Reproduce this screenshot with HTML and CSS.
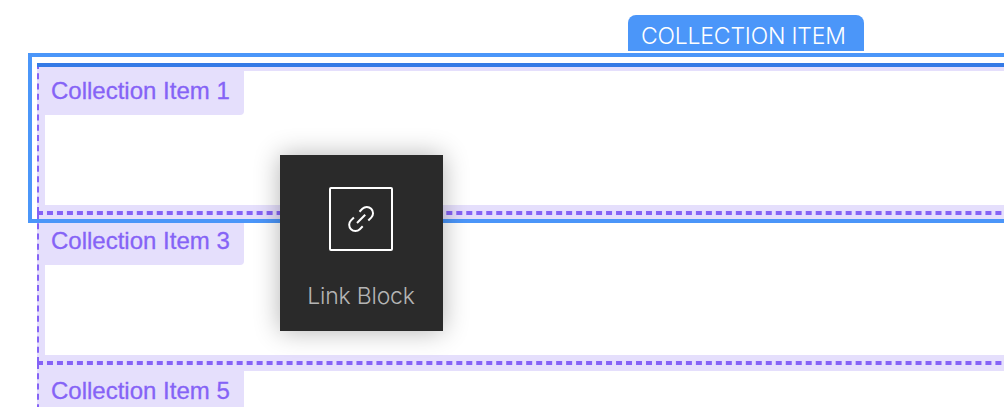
FILE: index.html
```
<!DOCTYPE html>
<html lang="en">
<head>
	<meta charset="utf-8">
	<title>Collection list</title>
	<link rel="stylesheet" href="styles.css">
</head>
<body>
	<div class="canvas">
		<div class="collection-list">
			<div class="collection-item">
				<span class="item-label">Collection Item 1</span>
			</div>
			<div class="collection-item">
				<span class="item-label">Collection Item 3</span>
			</div>
			<div class="collection-item">
				<span class="item-label">Collection Item 5</span>
			</div>
		</div>

		<!-- Drop target outline -->
		<div class="drop-line"></div>
		<div class="selection">
			<div class="selection-tag">COLLECTION ITEM</div>
		</div>

		<!-- Element being dragged -->
		<div class="drag-card">
			<svg class="drag-icon" width="64" height="64" viewBox="0 0 64 64" fill="none" stroke="#fff" stroke-width="2">
				<rect x="1" y="1" width="62" height="62" rx="1"/>
				<path d="M30.5 24.7 L33.4 21.8 A6.2 6.2 0 0 1 42.2 30.6 L39.3 33.5"/>
				<path d="M33.7 39.3 L30.8 42.2 A6.2 6.2 0 0 1 22 33.4 L24.9 30.5"/>
				<path d="M28 36 L36.2 27.8"/>
			</svg>
			<span class="drag-label">Link Block</span>
		</div>
	</div>
</body>
</html>
```
FILE: styles.css
```
body {
	margin: 0;
	background: #fff;
	font-family: Inter, sans-serif;
}

.canvas {
	position: relative;
	height: 407px;
	overflow: hidden;
}

.collection-list {
	width: 1204px;
	padding: 63px 0 0 37px;
}

.collection-item {
	box-sizing: border-box;
	height: 150px;
	border: 2px dashed #8563f6;
	background: #e5dffc;
	box-shadow: inset 0 0 0 6px #e5dffc, inset 0 0 0 200px #fff;
}

.item-label {
	display: block;
	box-sizing: border-box;
	width: 205px;
	height: 50px;
	padding: 12px 0 0 12px;
	border-bottom-right-radius: 4px;
	background: #e5dffc;
	color: #8563f6;
	font: 24px/28px "Liberation Sans", Arial, sans-serif;
	-webkit-text-stroke: 0.3px #8563f6;
	white-space: nowrap;
}

.drop-line {
	position: absolute;
	top: 63px;
	left: 37px;
	right: 0;
	height: 4px;
	background: #347ae6;
}

.selection {
	position: absolute;
	top: 53px;
	left: 28px;
	width: 1200px;
	height: 162px;
	border: 4px solid #4b96f9;
}

.selection-tag {
	position: absolute;
	top: -42px;
	left: 596px;
	box-sizing: border-box;
	width: 236px;
	height: 36px;
	padding-left: 13px;
	border-radius: 8px 8px 0 0;
	background: #4b96f9;
	color: #fff;
	font-size: 23px;
	font-weight: 350;
	letter-spacing: -0.2px;
	line-height: 42px;
	white-space: nowrap;
}

.drag-card {
	position: absolute;
	top: 155px;
	left: 280px;
	box-sizing: border-box;
	width: 163px;
	height: 176px;
	padding: 32px 1px 0 0;
	display: flex;
	flex-direction: column;
	align-items: center;
	background: #2a2a2a;
	box-shadow: 0 0 24px rgba(0, 0, 0, 0.3);
}

.drag-label {
	margin-top: 30px;
	color: #b4b4b4;
	font-size: 23px;
	font-weight: 350;
	letter-spacing: -0.2px;
	line-height: 30px;
}
```
